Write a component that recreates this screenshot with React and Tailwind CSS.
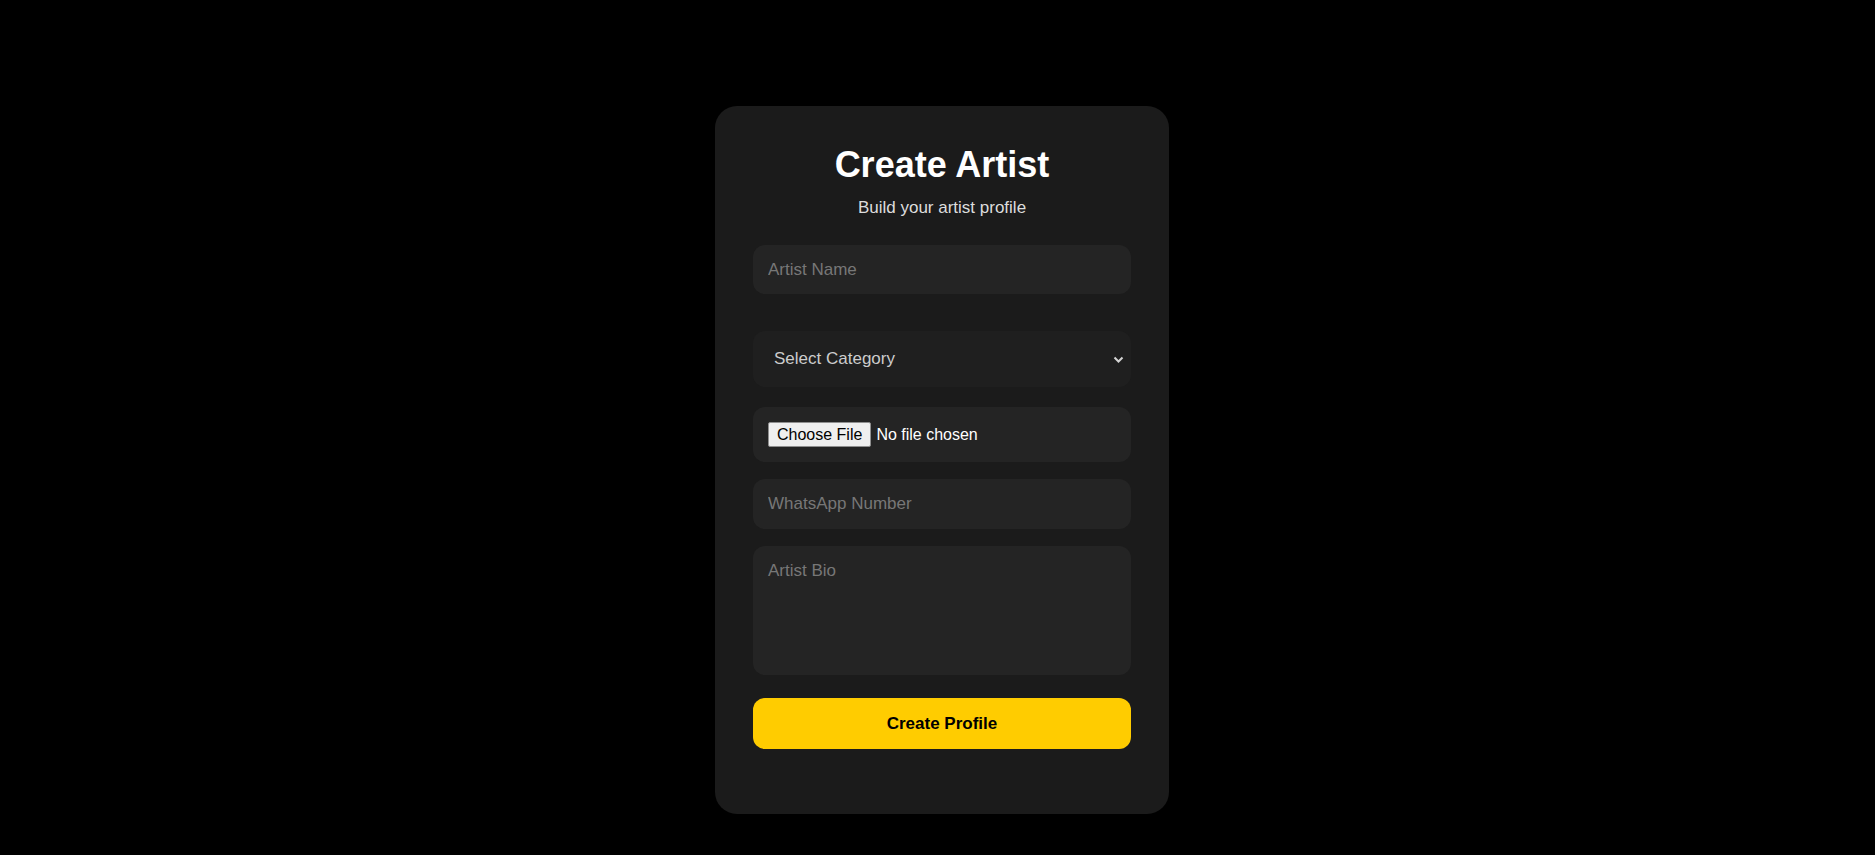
import React from 'react';

export default function App() {
  return (
    <div className="min-h-[855px] bg-black pt-[106px] pl-[9px] flex justify-center" style={{ fontFamily: '"Liberation Sans", Arial, sans-serif' }}>
      <form
        className="w-[454px] h-[708px] bg-[#1b1b1b] rounded-[22px] px-[38px] pt-[38px]"
        onSubmit={(e) => e.preventDefault()}
      >
        <h1 className="text-center text-white font-bold text-[36px] leading-[41px]">Create Artist</h1>
        <p className="mt-[13px] text-center text-[#dddddd] text-[17px] leading-[20px]">Build your artist profile</p>

        <input
          type="text"
          placeholder="Artist Name"
          className="mt-[27px] block w-full h-[49px] px-[15px] rounded-xl bg-[#242424] text-white text-[17px] placeholder:text-[#777777] outline-none"
        />

        <div className="relative mt-[37px] h-[56px]">
          <select
            defaultValue=""
            className="block w-full h-full appearance-none pl-[21px] pr-10 rounded-xl bg-[#1f1f1f] text-[#cccccc] text-[17px] outline-none"
          >
            <option value="" disabled>Select Category</option>
            <option>Singer</option>
            <option>Dancer</option>
            <option>Painter</option>
          </select>
          <svg className="pointer-events-none absolute right-[7px] top-[25px]" width="11" height="7" viewBox="0 0 11 7" fill="none">
            <path d="M1.5 1.5l4 4 4-4" stroke="#d4d4d4" strokeWidth="2" />
          </svg>
        </div>

        <label className="mt-[20px] flex items-center h-[55px] px-[15px] rounded-xl bg-[#242424] cursor-pointer">
          <input type="file" className="hidden" />
          <span className="h-[25px] px-[8px] flex items-center bg-[#efefef] border border-[#8f8f8f] rounded-[2px] text-black text-[16px]">Choose File</span>
          <span className="ml-[5px] text-white text-[16px]">No file chosen</span>
        </label>

        <input
          type="text"
          placeholder="WhatsApp Number"
          className="mt-[17px] block w-full h-[50px] px-[15px] rounded-xl bg-[#242424] text-white text-[17px] placeholder:text-[#777777] outline-none"
        />

        <textarea
          placeholder="Artist Bio"
          className="mt-[17px] block w-full h-[129px] px-[15px] py-[15px] rounded-xl bg-[#242424] text-white text-[17px] leading-[20px] placeholder:text-[#777777] outline-none resize-none"
        />

        <button
          type="submit"
          className="mt-[23px] block w-full h-[51px] rounded-xl bg-[#ffcc00] text-black font-bold text-[17px]"
        >
          Create Profile
        </button>
      </form>
    </div>
  );
}
